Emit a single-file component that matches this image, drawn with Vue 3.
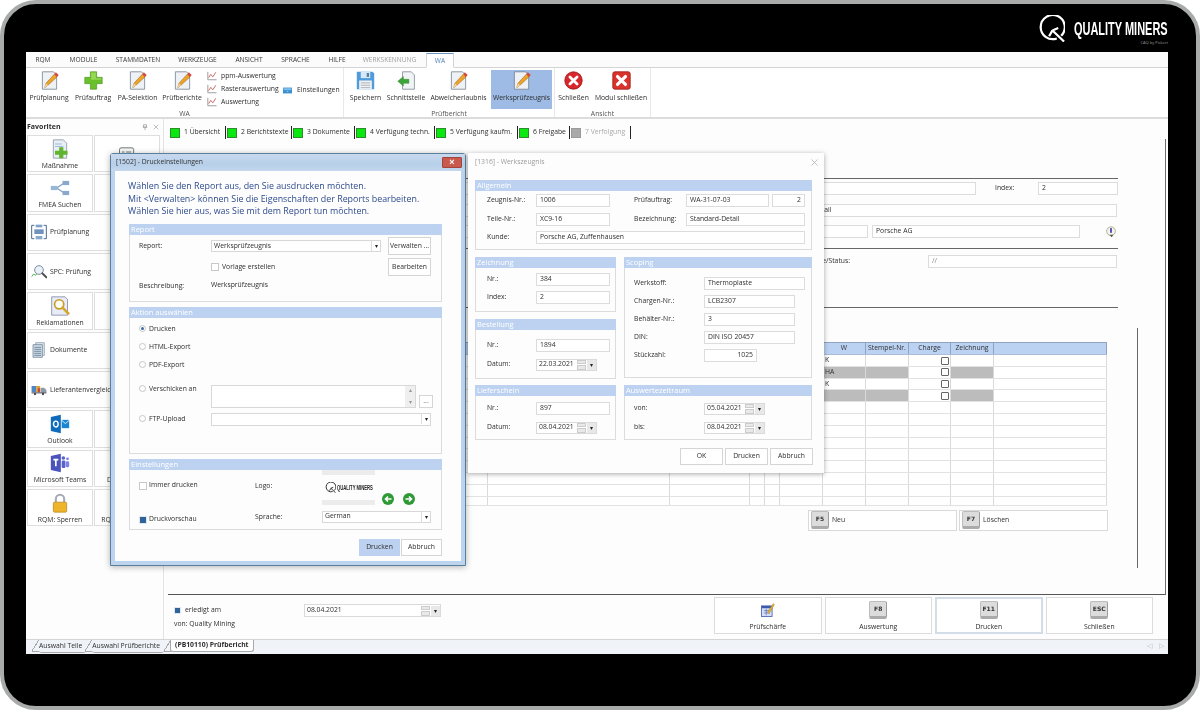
<script setup>
const menu = [
  { t: 'RQM', w: 34 }, { t: 'MODULE', w: 47 }, { t: 'STAMMDATEN', w: 62 }, { t: 'WERKZEUGE', w: 57 },
  { t: 'ANSICHT', w: 46 }, { t: 'SPRACHE', w: 47 }, { t: 'HILFE', w: 36 }
]
const rg1 = [
  { t: 'Prüfplanung', i: 'pen', w: 44 }, { t: 'Prüfauftrag', i: 'plus', w: 44 },
  { t: 'PA-Selektion', i: 'pen', w: 45 }, { t: 'Prüfberichte', i: 'pen', w: 44 }
]
const rg2 = [
  { t: 'Speichern', i: 'floppy', w: 41 }, { t: 'Schnittstelle', i: 'iface', w: 40 },
  { t: 'Abweicherlaubnis', i: 'pen', w: 65 }, { t: 'Werksprüfzeugnis', i: 'pen', w: 61, sel: true }
]
const rg3 = [
  { t: 'Schließen', i: 'xcircle', w: 37 }, { t: 'Modul schließen', i: 'xsquare', w: 58 }
]
const steps = [
  { t: '1 Übersicht', w: 57 }, { t: '2 Berichtstexte', w: 66 }, { t: '3 Dokumente', w: 63 },
  { t: '4 Verfügung techn.', w: 80 }, { t: '5 Verfügung kaufm.', w: 83 }, { t: '6 Freigabe', w: 52 },
  { t: '7 Verfolgung', w: 61, off: true }
]
const side = [
  { cells: [{ t: 'Maßnahme', i: 'docplus' }, { t: '', i: 'list' }] },
  { cells: [{ t: 'FMEA Suchen', i: 'nodes' }, { t: '', i: '' }] },
  { wide: true, t: 'Prüfplanung', i: 'plan' },
  { wide: true, t: 'SPC: Prüfung', i: 'spc' },
  { cells: [{ t: 'Reklamationen', i: 'rekl' }, { t: '', i: '' }] },
  { wide: true, t: 'Dokumente', i: 'docs' },
  { wide: true, t: 'Lieferantenvergleich', i: 'truck' },
  { cells: [{ t: 'Outlook', i: 'outlook' }, { t: '', i: '' }] },
  { cells: [{ t: 'Microsoft Teams', i: 'teams' }, { t: 'Datenblätter', i: '' }] },
  { cells: [{ t: 'RQM: Sperren', i: 'lock' }, { t: 'RQM: Abmelden', i: '' }] }
]
const gridCols = [320, 182, 80, 15, 15, 43, 43, 43, 42, 43, 113]
const gridRows = [
  { w: 'K' }, { w: 'HA', gray: true }, { w: 'K' }, { w: '', gray: true },
  {}, {}, {}, {}, {}, {}, {}, {}, {}
]
const headers = ['', '', '', '', '', '', 'W', 'Stempel-Nr.', 'Charge', 'Zeichnung', '']
const bottomBtns = [
  { t: 'Prüfschärfe', i: 'cal' }, { t: 'Auswertung', k: 'F8' },
  { t: 'Drucken', k: 'F11', on: true }, { t: 'Schließen', k: 'ESC' }
]
</script>

<template>
  <div class="device">
    <svg class="defs" width="0" height="0" aria-hidden="true">
      <symbol id="i-pen" viewBox="0 0 24 24">
        <path d="M3 1h14l4 4v18H3z" fill="#eef1f5" stroke="#75808e" stroke-width="1" />
        <path d="M6 21l1.500-5.500L18 4l3.500 3.500L10 18z" fill="#eda32a" stroke="#8d5f15" stroke-width=".6" />
        <path d="M18 4l2-2.400 3.600 3.400-2.100 2.500z" fill="#d5493e" />
        <path d="M6 21l1.500-5.500 2.500 2.500z" fill="#f5d9a5" />
      </symbol>
      <symbol id="i-plus" viewBox="0 0 24 24">
        <path d="M8 1h8v7h7v8h-7v7H8v-7H1V8h7z" fill="#6abf2c" stroke="#4c9320" stroke-width=".8" />
        <path d="M9 2h6v7h7v2H9z" fill="#93d951" />
      </symbol>
      <symbol id="i-floppy" viewBox="0 0 24 24">
        <path d="M1 1h20l2 2v20H1z" fill="#4f9bdc" />
        <path d="M6 1h12v8H6z" fill="#d7e8f6" />
        <path d="M13.500 2.500h3v5h-3z" fill="#5d7f9d" />
        <path d="M4 12h16v11H4z" fill="#f2f2f2" />
        <path d="M6 15h12M6 18h12M6 21h12" stroke="#9aa4ad" stroke-width="1" />
      </symbol>
      <symbol id="i-iface" viewBox="0 0 24 24">
        <path d="M7 1h11l4 4v18H7z" fill="#f1f4f6" stroke="#7d8894" stroke-width="1" />
        <path d="M1 13l7-6v3.500h7v5H8V19z" fill="#3ca53a" stroke="#22791f" stroke-width=".5" />
      </symbol>
      <symbol id="i-xcircle" viewBox="0 0 24 24">
        <circle cx="12" cy="12" r="11" fill="#d8262c" stroke="#9c1115" stroke-width="1" />
        <path d="M7.500 7.500l9 9m0-9l-9 9" stroke="#fff" stroke-width="3.500" stroke-linecap="round" />
      </symbol>
      <symbol id="i-xsquare" viewBox="0 0 24 24">
        <rect x="1" y="1" width="22" height="22" rx="2.500" fill="#d8342c" stroke="#9c1a15" stroke-width="1" />
        <path d="M7 7l10 10m0-10L7 17" stroke="#fff" stroke-width="4" stroke-linecap="round" />
      </symbol>
      <symbol id="i-chart" viewBox="0 0 12 12">
        <path d="M1 1v9.500h10.500" fill="none" stroke="#8b8b8b" stroke-width="1" />
        <path d="M2 8l2.500-4 2.500 3 3.500-5.500" fill="none" stroke="#c2554c" stroke-width="1" />
      </symbol>
      <symbol id="i-card" viewBox="0 0 14 9">
        <rect width="14" height="9" fill="#3a8fcf" />
        <rect x="1" y="1" width="12" height="3" fill="#7fc0ec" />
        <path d="M6 5.500h2v1H6z" fill="#dcefff" />
      </symbol>
      <symbol id="i-docplus" viewBox="0 0 24 24">
        <path d="M4 1h12l4 4v18H4z" fill="#e9eef4" stroke="#8d97a3" stroke-width="1" />
        <path d="M6 6h8M6 9h10" stroke="#8fb4d8" stroke-width="1" />
        <path d="M11 10h5v4h5v5h-5v4h-5v-4H6v-5h5z" fill="#5eb42c" />
      </symbol>
      <symbol id="i-list" viewBox="0 0 24 24">
        <rect x="3" y="1" width="17" height="22" rx="2" fill="#f6f6f6" stroke="#6d7b78" stroke-width="1.200" />
        <path d="M6 6h3M11 6h6M6 11h3M11 11h6M6 16h3M11 16h6" stroke="#6d7b78" stroke-width="1.400" />
        <path d="M14 17h8v6h-8z" fill="#b8b8b8" />
      </symbol>
      <symbol id="i-nodes" viewBox="0 0 24 24">
        <path d="M8 12l9-6M8 12l9 6" stroke="#7f9fc4" stroke-width="1.500" />
        <rect x="1" y="9.500" width="8" height="5" fill="#9ab6d6" />
        <rect x="15" y="3.500" width="8" height="5" fill="#8ba9cc" />
        <rect x="15" y="15.500" width="8" height="5" fill="#8ba9cc" />
      </symbol>
      <symbol id="i-plan" viewBox="0 0 24 24">
        <path d="M5 2H1v20h4M19 2h4v20h-4" fill="none" stroke="#4d6a8e" stroke-width="1.500" />
        <rect x="7" y="1" width="10" height="4" fill="#7ea1c8" />
        <rect x="5" y="8" width="14" height="7" fill="#6f93bb" />
        <rect x="7" y="18" width="10" height="5" fill="#88a8cc" />
      </symbol>
      <symbol id="i-spc" viewBox="0 0 24 24">
        <path d="M1 19l3-4 3 2 3-5" fill="none" stroke="#58b25a" stroke-width="1.500" />
        <circle cx="12" cy="9" r="6.500" fill="#eaf2f8" stroke="#7b8ea2" stroke-width="1.500" />
        <path d="M17 14l6 6" stroke="#4c4c4c" stroke-width="3" stroke-linecap="round" />
      </symbol>
      <symbol id="i-rekl" viewBox="0 0 24 24">
        <path d="M2 1h16l3 3v19H2z" fill="#e9ecf6" stroke="#8389a8" stroke-width="1" />
        <circle cx="11" cy="10" r="5.500" fill="#fdfdf2" stroke="#c79d2a" stroke-width="2" />
        <path d="M15 14l7 7" stroke="#d3a62d" stroke-width="3" stroke-linecap="round" />
      </symbol>
      <symbol id="i-docs" viewBox="0 0 24 24">
        <path d="M7 1h13v19H7z" fill="#dfe6ee" stroke="#7e8fa2" stroke-width="1" />
        <path d="M3 4h14v19H3z" fill="#cfdce9" stroke="#61748a" stroke-width="1" />
        <path d="M5 8h10M5 11h10M5 14h10M5 17h10M5 20h10" stroke="#4d6480" stroke-width="1" />
      </symbol>
      <symbol id="i-truck" viewBox="0 0 28 24">
        <rect x="1" y="5" width="8" height="11" fill="#4e86c6" />
        <rect x="9" y="5" width="7" height="11" fill="#d8a13a" />
        <rect x="12" y="9" width="4" height="7" fill="#c8473c" />
        <path d="M17 8h6l4 4v5H17z" fill="#8d9bab" />
        <rect x="1" y="16" width="26" height="2" fill="#667" />
        <circle cx="7" cy="19" r="2" fill="#444" />
        <circle cx="21" cy="19" r="2" fill="#444" />
      </symbol>
      <symbol id="i-outlook" viewBox="0 0 24 24">
        <path d="M1 3.500L13 1v22L1 20.500z" fill="#0f6cbd" />
        <ellipse cx="7" cy="12" rx="2.800" ry="3.500" fill="none" stroke="#fff" stroke-width="1.700" />
        <path d="M14 7h9v10h-9z" fill="#1884d2" />
        <path d="M14 7.500l4.500 4 4.500-4" fill="none" stroke="#fff" stroke-width="1" />
      </symbol>
      <symbol id="i-teams" viewBox="0 0 24 24">
        <path d="M1 3.500L13 1v22L1 20.500z" fill="#4b53bc" />
        <path d="M4 8h6M7 8v8" stroke="#fff" stroke-width="2" />
        <rect x="14" y="9" width="4.500" height="9" rx="1.500" fill="#5a62c8" />
        <rect x="19" y="10" width="4" height="7" rx="1.500" fill="#7b83eb" />
        <circle cx="16" cy="6" r="2.200" fill="#5a62c8" />
        <circle cx="21" cy="7" r="1.700" fill="#7b83eb" />
      </symbol>
      <symbol id="i-lock" viewBox="0 0 24 24">
        <path d="M7 11V7a5 5 0 0 1 10 0v4" fill="none" stroke="#a6abb2" stroke-width="2.500" />
        <rect x="4" y="11" width="16" height="12" rx="1.500" fill="#eeb52c" stroke="#b07f12" stroke-width=".8" />
      </symbol>
      <symbol id="i-cal" viewBox="0 0 24 24">
        <rect x="1" y="5" width="18" height="18" fill="#d6def5" stroke="#3f5bb0" stroke-width="1.400" />
        <path d="M1 5h18v4H1z" fill="#3f5bb0" />
        <path d="M5 13h10M5 17h10M9 10v11" stroke="#3f5bb0" stroke-width="1" />
        <path d="M11 16L21 1l2 2-9 15z" fill="#e3b62e" stroke="#7a5d10" stroke-width=".5" />
      </symbol>
      <symbol id="i-info" viewBox="0 0 16 16">
        <circle cx="8" cy="7" r="5.800" fill="#f5f5ea" stroke="#9a9a70" stroke-width="1" />
        <rect x="6.800" y="2.800" width="2.400" height="6.500" rx="1" fill="#4b3ec8" />
        <path d="M6 11.500h5L9 15z" fill="#505050" />
      </symbol>
      <symbol id="i-q" viewBox="0 0 28 28">
        <path d="M19.500 24.300A12.500 12.500 0 1 1 24 21.500" fill="none" stroke="currentColor" stroke-width="2.300" />
        <path d="M27 27.500L15 16M15 16l-3.500 6M15 16l6-2.500" fill="none" stroke="currentColor" stroke-width="2.300" />
      </symbol>
    </svg>

    <div class="brand">
      <svg class="brand-q"><use href="#i-q" /></svg>
      <div class="brand-text">
        <span class="brand-name">QUALITY MINERS</span>
        <span class="brand-sub">CAQ by Pickert</span>
      </div>
    </div>

    <div class="screen">
      <div class="menubar">
        <span v-for="m in menu" :key="m.t" class="menu-item" :style="{ width: m.w + 'px' }">{{ m.t }}</span>
        <span class="menu-item menu-dim">WERKSKENNUNG</span>
        <span class="menu-tab">WA</span>
      </div>

      <div class="ribbon">
        <div class="rgroup rg-a">
          <div class="ritems">
            <div v-for="r in rg1" :key="r.t" class="ritem" :style="{ width: r.w + 'px' }">
              <svg class="ricon"><use :href="'#i-' + r.i" /></svg>
              <span>{{ r.t }}</span>
            </div>
            <div class="rsmall">
              <div class="rs-line"><svg class="rs-icon"><use href="#i-chart" /></svg>ppm-Auswertung</div>
              <div class="rs-line"><svg class="rs-icon"><use href="#i-chart" /></svg>Rasterauswertung</div>
              <div class="rs-line"><svg class="rs-icon"><use href="#i-chart" /></svg>Auswertung</div>
            </div>
            <div class="rs-line rs-set"><svg class="rs-card"><use href="#i-card" /></svg>Einstellungen</div>
          </div>
          <div class="rlabel">WA</div>
        </div>
        <div class="rgroup rg-b">
          <div class="ritems">
            <div v-for="r in rg2" :key="r.t" class="ritem" :class="{ selected: r.sel }" :style="{ width: r.w + 'px' }">
              <svg class="ricon"><use :href="'#i-' + r.i" /></svg>
              <span>{{ r.t }}</span>
            </div>
          </div>
          <div class="rlabel">Prüfbericht</div>
        </div>
        <div class="rgroup rg-c">
          <div class="ritems">
            <div v-for="r in rg3" :key="r.t" class="ritem" :style="{ width: r.w + 'px' }">
              <svg class="ricon"><use :href="'#i-' + r.i" /></svg>
              <span>{{ r.t }}</span>
            </div>
          </div>
          <div class="rlabel">Ansicht</div>
        </div>
      </div>

      <div class="body">
        <aside class="sidebar">
          <div class="side-head">
            <b>Favoriten</b>
            <span class="side-tools">
              <svg class="pin" viewBox="0 0 8 8"><path d="M2 1h4v3H2zM1 4.500h6M4 5v3" fill="none" stroke="#999" stroke-width="1" /></svg>
              <svg class="pin" viewBox="0 0 8 8"><path d="M1 1l6 6m0-6L1 7" stroke="#aaa" stroke-width="1" /></svg>
            </span>
          </div>
          <div class="side-list">
            <template v-for="(s, i) in side" :key="i">
              <div v-if="s.wide" class="side-wide">
                <svg class="side-icon-s"><use :href="'#i-' + s.i" /></svg>
                <span>{{ s.t }}</span>
              </div>
              <div v-else class="side-pair">
                <div v-for="c in s.cells" :key="c.t + c.i" class="side-cell">
                  <svg v-if="c.i" class="side-icon"><use :href="'#i-' + c.i" /></svg>
                  <span>{{ c.t }}</span>
                </div>
              </div>
            </template>
          </div>
        </aside>

        <main class="main">
          <div class="steps">
            <div v-for="s in steps" :key="s.t" class="step" :class="{ off: s.off }" :style="{ width: s.w + 'px' }">
              <i class="lamp"></i>
              <span>{{ s.t }}</span>
            </div>
          </div>

          <div class="pane">
            <div class="form">
              <div class="fsec sec-a">
                <div class="frow">
                  <span class="inp w-f1"></span>
                  <span class="flab lab-index">Index:</span>
                  <span class="inp w-f2">2</span>
                </div>
                <div class="frow">
                  <span class="inp w-f3">Standard-Detail</span>
                </div>
                <div class="frow">
                  <span class="inp w-f4"></span>
                  <span class="inp w-f5">Porsche AG</span>
                  <svg class="info"><use href="#i-info" /></svg>
                </div>
              </div>
              <div class="fsec sec-b">
                <div class="frow">
                  <span class="flab lab-status">Name/Status:</span>
                  <span class="inp w-f6 dim">//</span>
                </div>
              </div>
              <div class="fsec sec-c"></div>
            </div>
            <div class="tabpage">
              <div class="grid">
                <div class="grow ghead">
                  <span v-for="(h, i) in headers" :key="i" class="gcell" :style="{ width: gridCols[i] + 'px' }">{{ h }}</span>
                </div>
                <div v-for="(r, ri) in gridRows" :key="ri" class="grow">
                  <span
                    v-for="(w, i) in gridCols"
                    :key="i"
                    class="gcell"
                    :class="{ gray: r.gray && i >= 6 && i <= 9 && i !== 8 }"
                    :style="{ width: w + 'px' }"
                  >
                    <template v-if="i === 6">{{ r.w }}</template>
                    <i v-if="i === 8 && ri < 4" class="gcheck"></i>
                  </span>
                </div>
              </div>
              <div class="fbtns">
                <div class="fbtn"><span class="key">F5</span>Neu</div>
                <div class="fbtn"><span class="key">F7</span>Löschen</div>
              </div>
            </div>
          </div>

          <div class="footer">
            <div class="foot-left">
              <div class="foot-l1"><i class="cb on"></i>erledigt am</div>
              <div class="foot-l2">von: Quality Mining</div>
            </div>
            <div class="date date-foot">
              <span class="date-v">08.04.2021</span>
              <span class="spin"><i></i><i></i></span>
              <span class="drop">▾</span>
            </div>
            <div class="foot-btns">
              <div v-for="b in bottomBtns" :key="b.t" class="fb" :class="{ on: b.on }">
                <span v-if="b.k" class="key">{{ b.k }}</span>
                <svg v-else class="fb-icon"><use :href="'#i-' + b.i" /></svg>
                <span class="fb-t">{{ b.t }}</span>
              </div>
            </div>
          </div>
        </main>
      </div>

      <div class="tabs">
        <span class="tab tab-1">Auswahl Teile</span>
        <span class="tab tab-2">Auswahl Prüfberichte</span>
        <span class="tab tab-on">(PB10110) Prüfbericht</span>
        <span class="tab-nav">◁ ▷</span>
      </div>

      <!-- Window: Druckeinstellungen -->
      <section class="win win-print">
        <header class="pt">
          <span>[1502] - Druckeinstellungen</span>
          <span class="pt-x">×</span>
        </header>
        <div class="pb">
          <p class="intro">Wählen Sie den Report aus, den Sie ausdrucken möchten.<br />Mit &lt;Verwalten&gt; können Sie die Eigenschaften der Reports bearbeiten.<br />Wählen Sie hier aus, was Sie mit dem Report tun möchten.</p>

          <div class="grp g-report">
            <div class="gh">Report</div>
            <div class="gb gb-report">
              <div class="prow p18">
                <span class="pl">Report:</span>
                <span class="sel w170"><span>Werksprüfzeugnis</span><b>▾</b></span>
                <span class="btn pbtn">Verwalten ...</span>
              </div>
              <div class="prow p18">
                <span class="pl"></span>
                <span class="chk-line w177"><i class="cb"></i>Vorlage erstellen</span>
                <span class="btn pbtn pbtn2">Bearbeiten</span>
              </div>
              <div class="prow p-desc">
                <span class="pl">Beschreibung:</span>
                <span class="pv">Werksprüfzeugnis</span>
              </div>
            </div>
          </div>

          <div class="grp g-action">
            <div class="gh">Aktion auswählen</div>
            <div class="gb gb-action">
              <div class="radio"><i class="rd on"></i>Drucken</div>
              <div class="radio"><i class="rd"></i>HTML-Export</div>
              <div class="radio"><i class="rd"></i>PDF-Export</div>
              <div class="radio r-mail">
                <span class="rl"><i class="rd"></i>Verschicken an</span>
                <span class="ta"><span class="ta-bar"><em>▴</em><em>▾</em></span></span>
                <span class="btn dots">...</span>
              </div>
              <div class="radio r-ftp">
                <span class="rl"><i class="rd"></i>FTP-Upload</span>
                <span class="sel w220"><span></span><b>▾</b></span>
              </div>
            </div>
          </div>

          <div class="grp g-set">
            <div class="gh">Einstellungen</div>
            <div class="gb gb-set">
              <div class="set-1">
                <span class="set-chk"><i class="cb"></i>Immer drucken</span>
                <span class="set-lab">Logo:</span>
                <div class="logo-box">
                  <i class="strip"></i>
                  <div class="logo-mini">
                    <svg class="logo-q"><use href="#i-q" /></svg>
                    <span>QUALITY MINERS</span>
                  </div>
                  <i class="strip"></i>
                </div>
                <div class="arrows">
                  <svg viewBox="0 0 12 12"><circle cx="6" cy="6" r="6" fill="#2f9a35" /><path d="M9.500 6H4M6 3.500L3.500 6 6 8.500" fill="none" stroke="#fff" stroke-width="1.600" /></svg>
                  <svg viewBox="0 0 12 12"><circle cx="6" cy="6" r="6" fill="#2f9a35" /><path d="M2.500 6H8M6 3.500L8.500 6 6 8.500" fill="none" stroke="#fff" stroke-width="1.600" /></svg>
                </div>
              </div>
              <div class="set-2">
                <span class="set-chk"><i class="cb on"></i>Druckvorschau</span>
                <span class="set-lab">Sprache:</span>
                <span class="sel w109"><span>German</span><b>▾</b></span>
              </div>
            </div>
          </div>

          <div class="pfoot">
            <span class="btn fbtn-a on">Drucken</span>
            <span class="btn fbtn-a">Abbruch</span>
          </div>
        </div>
      </section>

      <!-- Window: Werkszeugnis -->
      <section class="win win-cert">
        <header class="ct">
          <span>[1316] - Werkszeugnis</span>
          <svg class="ct-x" viewBox="0 0 8 8"><path d="M.5.500l7 7m0-7l-7 7" stroke="#aaa" stroke-width=".8" /></svg>
        </header>
        <div class="grp g-all">
          <div class="gh">Allgemein</div>
          <div class="gb gb-all">
            <div class="crow">
              <span class="cl">Zeugnis-Nr.:</span><span class="inp w74">1006</span>
              <span class="cl cl2">Prüfauftrag:</span><span class="inp w83">WA-31-07-03</span><span class="inp w33 right">2</span>
            </div>
            <div class="crow">
              <span class="cl">Teile-Nr.:</span><span class="inp w74">XC9-16</span>
              <span class="cl cl2">Bezeichnung:</span><span class="inp w119">Standard-Detail</span>
            </div>
            <div class="crow">
              <span class="cl">Kunde:</span><span class="inp w269">Porsche AG, Zuffenhausen</span>
            </div>
          </div>
        </div>
        <div class="cols">
          <div class="col-l">
            <div class="grp g-zei">
              <div class="gh">Zeichnung</div>
              <div class="gb gb-c5">
                <div class="crow"><span class="cl">Nr.:</span><span class="inp w74">384</span></div>
                <div class="crow"><span class="cl">Index:</span><span class="inp w74">2</span></div>
              </div>
            </div>
            <div class="grp g-bes">
              <div class="gh">Bestellung</div>
              <div class="gb gb-c9">
                <div class="crow"><span class="cl">Nr.:</span><span class="inp w74">1894</span></div>
                <div class="crow"><span class="cl">Datum:</span>
                  <div class="date"><span class="date-v">22.03.2021</span><span class="spin"><i></i><i></i></span><span class="drop">▾</span></div>
                </div>
              </div>
            </div>
            <div class="grp g-lie">
              <div class="gh">Lieferschein</div>
              <div class="gb gb-c6">
                <div class="crow"><span class="cl">Nr.:</span><span class="inp w74">897</span></div>
                <div class="crow"><span class="cl">Datum:</span>
                  <div class="date"><span class="date-v">08.04.2021</span><span class="spin"><i></i><i></i></span><span class="drop">▾</span></div>
                </div>
              </div>
            </div>
          </div>
          <div class="col-r">
            <div class="grp g-sco">
              <div class="gh">Scoping</div>
              <div class="gb gb-sco">
                <div class="crow"><span class="cl cl3">Werkstoff:</span><span class="inp w101">Thermoplaste</span></div>
                <div class="crow"><span class="cl cl3">Chargen-Nr.:</span><span class="inp w91">LCB2307</span></div>
                <div class="crow"><span class="cl cl3">Behälter-Nr.:</span><span class="inp w91">3</span></div>
                <div class="crow"><span class="cl cl3">DIN:</span><span class="inp w91">DIN ISO 20457</span></div>
                <div class="crow"><span class="cl cl3">Stückzahl:</span><span class="inp w53 right">1025</span></div>
              </div>
            </div>
            <div class="grp g-aus">
              <div class="gh">Auswertezeitraum</div>
              <div class="gb gb-aus">
                <div class="crow"><span class="cl cl3">von:</span>
                  <div class="date"><span class="date-v">05.04.2021</span><span class="spin"><i></i><i></i></span><span class="drop">▾</span></div>
                </div>
                <div class="crow"><span class="cl cl3">bis:</span>
                  <div class="date"><span class="date-v">08.04.2021</span><span class="spin"><i></i><i></i></span><span class="drop">▾</span></div>
                </div>
              </div>
            </div>
          </div>
        </div>
        <div class="cfoot">
          <span class="btn cbtn">OK</span>
          <span class="btn cbtn">Drucken</span>
          <span class="btn cbtn">Abbruch</span>
        </div>
      </section>
    </div>
  </div>
</template>

<style>
html, body { margin: 0; background: #fff; }
</style>

<style scoped>
.defs { position: absolute; }
.device {
  position: relative;
  width: 1200px; height: 710px;
  box-sizing: border-box;
  background: #000;
  border: 4px solid #a9abab;
  border-radius: 36px;
  padding: 48px 28px 0 22px;
  overflow: hidden;
  font-family: "Open Sans", "Liberation Sans", sans-serif;
  font-size: 6.8px;
  color: #2e2e2e;
  line-height: 1.2;
}
.brand {
  position: absolute; top: 11px; right: 28px;
  display: flex; gap: 6px; color: #fff;
}
.brand-q { width: 27px; height: 27px; color: #fff; }
.brand-text { display: flex; flex-direction: column; align-items: flex-end; width: 97px; padding-top: 5px; }
.brand-name {
  font: 700 18px/19px "Liberation Sans", sans-serif;
  transform: scaleX(.61); transform-origin: right center;
  white-space: nowrap;
}
.brand-sub { font-size: 4px; color: #9a9a9a; margin-top: 1px; line-height: 5px; }

.screen {
  position: relative;
  width: 1142px; height: 602px;
  background: #fdfdfd;
  display: flex; flex-direction: column;
  filter: blur(.25px);
}

/* menu */
.menubar {
  height: 16px; box-sizing: border-box;
  display: flex; align-items: center;
  background: #fbfbfb; border-bottom: 1px solid #d4d4d4;
  font-size: 6.600px; color: #3a3a3a;
  flex: none;
}
.menu-item { text-align: center; white-space: nowrap; }
.menu-dim { color: #a0a0a0; width: 63px; margin-left: 3px; }
.menu-tab {
  margin: 1px 0 -1px 5px; width: 28px; height: 15px; box-sizing: border-box;
  display: flex; align-items: center; justify-content: center;
  border: 1px solid #d4d4d4; border-top: 1px solid #6b94c4; border-bottom: 1px solid #fff;
  background: #fff; color: #4d7fb8;
}

/* ribbon */
.ribbon {
  height: 51px; box-sizing: border-box; flex: none;
  display: flex; background: #fff; border-bottom: 2px solid #dcdcdc;
}
.rgroup { display: flex; flex-direction: column; border-right: 1px solid #e8e8e8; box-sizing: border-box; }
.rg-a { width: 318px; }
.rg-b { width: 211px; }
.rg-c { width: 96px; }
.ritems { display: flex; height: 41px; padding-top: 2px; box-sizing: border-box; flex: none; }
.rg-a .ritems { padding-left: 1px; }
.rg-b .ritems { padding-left: 1px; }
.ritem { display: flex; flex-direction: column; align-items: center; padding-top: 1px; box-sizing: border-box; white-space: nowrap; }
.ritem span { margin-top: 4px; }
.ritem.selected { background: #9dbbe4; }
.ricon { width: 19px; height: 19px; flex: none; }
.rsmall { display: flex; flex-direction: column; gap: 3.200px; margin-left: 3px; padding-top: 1px; width: 76px; }
.rs-line { display: flex; align-items: center; gap: 4px; height: 10px; white-space: nowrap; }
.rs-icon { width: 10px; height: 10px; flex: none; }
.rs-set { margin-top: 15px; }
.rs-card { width: 9px; height: 7px; flex: none; margin-right: 1px; }
.rlabel { text-align: center; color: #555; margin-top: 1px; }

/* body */
.body { flex: 1; display: flex; min-height: 0; }
.sidebar { width: 138px; box-sizing: border-box; border-right: 1px solid #e3e3e3; padding: 0 1px; flex: none; overflow: hidden; }
.side-head { height: 16px; display: flex; align-items: center; justify-content: space-between; font-size: 7px; padding-right: 2px; }
.side-tools { display: flex; gap: 5px; padding-right: 1px; }
.pin { width: 6px; height: 6px; }
.side-list { display: flex; flex-direction: column; gap: 2px; }
.side-pair { display: flex; gap: 1px; height: 37.350px; }
.side-cell {
  width: 66px; box-sizing: border-box; border: 1px solid #dedede;
  display: flex; flex-direction: column; align-items: center; justify-content: flex-end;
  padding-bottom: 1.500px; background: #fff; white-space: nowrap; overflow: hidden;
}
.side-icon { width: 20px; height: 20px; margin-bottom: 3px; }
.side-wide {
  height: 37.350px; box-sizing: border-box; border: 1px solid #dedede; background: #fff;
  display: flex; align-items: center; gap: 3px; padding-left: 3px; white-space: nowrap;
}
.side-icon-s { width: 16px; height: 16px; flex: none; }

/* main */
.main { flex: 1; display: flex; flex-direction: column; padding: 0 2px 0 4px; min-width: 0; }
.steps { height: 20px; display: flex; align-items: flex-end; padding-left: 1px; font-size: 6.800px; flex: none; }
.step { display: flex; align-items: center; gap: 4px; height: 13px; box-sizing: border-box; border-right: 1px solid #222; padding-left: 1px; margin-right: 0; white-space: nowrap; }
.lamp { width: 10px; height: 10px; background: #0be80f; border: 1px solid #2c8c2c; box-sizing: border-box; flex: none; }
.step.off { color: #a9a9a9; }
.step.off .lamp { background: #a9a9a9; border-color: #9a9a9a; }

.pane {
  height: 456px; box-sizing: border-box; flex: none;
  border-right: 1px solid #6d6d6d; border-bottom: 1px solid #555;
  padding-top: 39px;
  display: flex; flex-direction: column;
}
.form { width: 950px; }
.fsec { border-top: 1.500px solid #666; box-sizing: border-box; }
.sec-a { height: 70px; padding-top: 3px; display: flex; flex-direction: column; gap: 8.500px; }
.sec-b { height: 59px; padding-top: 6px; }
.sec-c { height: 21px; }
.frow { display: flex; align-items: center; height: 13px; }
.inp {
  display: inline-flex; align-items: center; height: 13px; box-sizing: border-box;
  border: 1px solid #dcdcdc; padding: 0 3px; background: #fff; white-space: nowrap; flex: none;
}
.inp.right { justify-content: flex-end; }
.inp.dim { color: #888; }
.w-f1 { width: 808px; }
.lab-index { margin-left: 19px; width: 43px; }
.w-f2 { width: 80px; }
.w-f3 { width: 949px; padding-left: 613px; }
.w-f4 { width: 700px; }
.w-f5 { width: 208px; margin-left: 4px; }
.info { width: 12px; height: 12px; margin-left: 25px; }
.lab-status { width: 682px; text-align: right; box-sizing: border-box; }
.w-f6 { width: 189px; margin-left: 78px; }

.tabpage {
  flex: none; width: 970px; height: 240px; box-sizing: border-box;
  border-right: 1px solid #666;
  padding-top: 14px;
}
.grid { width: 939px; }
.grow { display: flex; height: 11.800px; box-sizing: border-box; border-bottom: 1px solid #e2e2e2; }
.grow:last-child { height: 9px; }
.ghead { height: 13px; background: #bcd2f2; border-top: 1px solid #8fa3c0; border-bottom: 1px solid #a9bcd8; text-align: center; }
.gcell {
  flex: none; box-sizing: border-box; border-right: 1px solid #dadada;
  display: flex; align-items: center; padding-left: 2px; position: relative; background: #fff;
}
.ghead .gcell { background: transparent; border-right-color: #8fa3c0; justify-content: center; padding-left: 0; }
.gcell.gray { background: #bcbcbc; }
.gcheck { position: absolute; right: 1px; top: 1.500px; width: 6px; height: 6px; border: 1px solid #666; background: #fdfdfd; border-radius: 1px; }

.fbtns { display: flex; gap: 2px; margin: 4px 0 0 640px; }
.fbtn {
  width: 149px; height: 21px; box-sizing: border-box; border: 1px solid #d9d9d9; background: #fff;
  display: flex; align-items: center; gap: 3px; padding-left: 2px;
}
.key {
  width: 18px; height: 18px; box-sizing: border-box; flex: none;
  display: inline-flex; align-items: flex-start; justify-content: center; padding-top: 3px;
  background: #dcdcdc; border: 1px solid #bcbcbc; border-right-color: #9c9c9c; border-bottom: 3px solid #aaa; border-radius: 2px;
  font: 700 6px "DejaVu Sans", sans-serif; color: #333;
}

.footer { flex: 1; display: flex; align-items: flex-start; }
.foot-left { width: 136px; padding-top: 10px; flex: none; padding-left: 6px; box-sizing: border-box; }
.foot-l1 { display: flex; align-items: center; gap: 4px; height: 10px; }
.foot-l1 .cb { width: 7px; height: 7px; }
.foot-l2 { margin-top: 5px; }
.cb { width: 8px; height: 8px; box-sizing: border-box; border: 1px solid #c9c9c9; background: #fff; flex: none; display: inline-block; }
.cb.on { background: #2f6499; border: 1px solid #dfe7f0; }
.date {
  width: 61px; height: 12px; box-sizing: border-box; flex: none;
  display: flex; align-items: center; border: 1px solid #dadada; background: #fff;
}
.date-v { flex: 1; padding-left: 2px; }
.spin { width: 9px; height: 10px; display: flex; flex-direction: column; gap: 1px; flex: none; }
.spin i { flex: 1; background: #e9e9e9; border: .5px solid #ccc; }
.drop { width: 9px; height: 10px; margin-left: 1px; text-align: center; background: #e8e8e8; font-size: 6px; line-height: 10px; color: #222; flex: none; }
.date-foot { width: 137px; height: 13px; margin-top: 9px; }
.foot-btns { display: flex; gap: 3px; margin-left: 273px; margin-top: 2px; }
.fb {
  width: 107.500px; height: 37px; box-sizing: border-box; border: 1px solid #dcdcdc; background: #fff;
  display: flex; flex-direction: column; align-items: center; padding-top: 3px;
}
.fb.on { border: 2px solid #d3dde8; padding-top: 2px; }
.fb-t { margin-top: 4px; }
.fb-icon { width: 14px; height: 14px; margin: 2px 0 2px; }

/* tabs */
.tabs {
  height: 15px; flex: none; box-sizing: border-box;
  background: #f0f3f8; border-top: 1px solid #d5d5d5;
  display: flex; align-items: flex-start;
  position: relative;
}
.tab { position: relative; white-space: nowrap; height: 12px; display: flex; align-items: center; border-bottom: 1px solid #a8a8a8; border-radius: 0 0 3px 3px; }
.tab-1 { margin-left: 13px; padding-right: 4px; }
.tab-2 { margin-left: 6px; padding-right: 4px; }
.tab::before {
  content: ""; position: absolute; left: -7px; top: 0; width: 7px; height: 12px;
  border-bottom: 1px solid #a8a8a8; box-sizing: border-box;
  background: linear-gradient(to top right, transparent 47%, #a8a8a8 47%, #a8a8a8 55%, transparent 55%);
  transform: scaleX(-1);
}
.tab-on { margin-left: 6px; padding: 0 4px; height: 12px; background: #fff; font-weight: 700; border: 1px solid #a8a8a8; border-top: none; box-sizing: border-box; font-size: 6.800px; }
.tab-nav { margin-left: auto; margin-right: 4px; color: #bbb; font-size: 7px; line-height: 12px; word-spacing: 5px; }

/* windows */
.win { position: absolute; box-sizing: border-box; }
.win-print {
  left: 84px; top: 101px; width: 356px; height: 413px;
  background: #bcd4ee; border: 1px solid #5a7f9c;
  box-shadow: 0 1px 6px rgba(0, 0, 0, .3);
  border-radius: 3px 3px 0 0;
  display: flex; flex-direction: column;
}
.pt {
  height: 17px; flex: none; display: flex; align-items: center; justify-content: space-between;
  padding: 0 3px 0 5px;
  background: linear-gradient(#c8d9ee, #b7cfe9 60%, #c4d8ee);
  color: #333;
}
.pt-x {
  width: 18px; height: 9px; border-radius: 1px;
  background: #c9584d; color: #fff; font: 700 9px/9px "Liberation Sans", sans-serif; text-align: center;
  border: 1px solid #a4453c; box-sizing: content-box;
}
.pb {
  flex: 1; margin: 0 4px 4px; background: #fdfdfd; padding: 0 19px 0 14px;
  display: flex; flex-direction: column;
}
.intro {
  margin: 9px 0 0 -1px; height: 44px; font-size: 8.900px; line-height: 12.500px; color: #2e4b8e; white-space: nowrap;
}
.grp { display: flex; flex-direction: column; box-sizing: border-box; }
.gh {
  height: 11px; flex: none; background: #bdd2f0; color: #fff; padding-left: 2px;
  font-size: 7.500px; line-height: 11px;
}
.gb { flex: 1; border: 1px solid #dcdcdc; border-top: none; box-sizing: border-box; background: #fdfdfd; }
.g-report { width: 313px; height: 78px; }
.g-action { width: 313px; height: 147px; margin-top: 5px; }
.g-set { width: 313px; height: 71px; margin-top: 5px; }
.gb-report { padding: 2px 0 0 9px; display: flex; flex-direction: column; gap: 3px; }
.prow { display: flex; align-items: center; }
.p18 { height: 18px; }
.pl { width: 72px; flex: none; }
.sel {
  height: 12px; box-sizing: border-box; border: 1px solid #d8d8d8; background: #fff;
  display: flex; align-items: center; justify-content: space-between; padding-left: 2px; flex: none;
}
.sel b { width: 8px; height: 10px; border-left: 1px solid #ddd; text-align: center; font-size: 6px; line-height: 10px; color: #222; font-weight: 400; }
.w170 { width: 170px; }
.w220 { width: 220px; height: 13px; }
.w109 { width: 109px; }
.btn {
  box-sizing: border-box; border: 1px solid #d5d5d5; background: #fff;
  display: inline-flex; align-items: center; justify-content: center; flex: none; white-space: nowrap;
}
.pbtn { width: 43px; height: 18px; margin-left: 7px; }
.chk-line { display: flex; align-items: center; gap: 3px; }
.w177 { width: 170px; flex: none; }
.pbtn2 { margin-left: 7px; }
.p-desc { height: 14px; }
.pv { margin-top: -2px; }

.gb-action { padding: 4.500px 0 0 9px; display: flex; flex-direction: column; }
.radio { display: flex; align-items: flex-start; gap: 3px; height: 12px; margin-bottom: 6px; line-height: 12px; }
.rd { width: 5px; height: 5px; border: 1px solid #c6c6c6; border-radius: 50%; background: #fff; flex: none; margin-top: 2.500px; position: relative; display: inline-block; }
.rd.on::after { content: ""; position: absolute; left: 1px; top: 1px; width: 3px; height: 3px; border-radius: 50%; background: #3c6ea5; }
.rl { width: 72px; flex: none; display: flex; gap: 3px; align-items: flex-start; white-space: nowrap; }
.r-mail { height: 25px; margin-top: 6px; gap: 0; margin-bottom: 5px; }
.r-ftp { gap: 0; }
.ta {
  width: 205px; height: 23px; margin-top: 2px; box-sizing: border-box; border: 1px solid #d8d8d8; background: #fff;
  display: flex; justify-content: flex-end;
}
.ta-bar { width: 10px; display: flex; flex-direction: column; justify-content: space-between; background: #efefef; color: #999; text-align: center; font-size: 6px; line-height: 9px; }
.ta-bar em { font-style: normal; }
.dots { width: 14px; height: 13px; margin: 12px 0 0 3px; color: #666; }

.gb-set { padding-left: 9px; }
.set-1 { display: flex; height: 35px; align-items: flex-start; position: relative; }
.set-chk { width: 116px; flex: none; display: flex; align-items: center; gap: 2px; margin-top: 11.500px; height: 8px; }
.set-lab { width: 67px; flex: none; margin-top: 11.500px; line-height: 8px; }
.logo-box { width: 53px; height: 35px; flex: none; display: flex; flex-direction: column; justify-content: space-between; margin-top: 0; }
.strip { display: block; height: 5px; background: #ececec; }
.logo-mini { display: flex; align-items: center; gap: 1px; padding-left: 3px; color: #222; }
.logo-q { width: 11px; height: 11px; color: #222; flex: none; }
.logo-mini span {
  font: 700 7px "Liberation Sans", sans-serif; white-space: nowrap;
  transform: scaleX(.6); transform-origin: left center; letter-spacing: 0;
}
.arrows { display: flex; gap: 9px; margin: 23px 0 0 7px; }
.arrows svg { width: 12px; height: 12px; }
.set-2 { display: flex; align-items: center; height: 13px; margin-top: 5px; }
.set-2 .set-chk { margin-top: 0; position: relative; top: 3px; }
.set-2 .set-lab { margin-top: 0; }
.pfoot { display: flex; justify-content: flex-start; gap: 1px; margin: 9px 0 0 230px; }
.fbtn-a { width: 41px; height: 17px; }
.fbtn-a.on { background: #bdd2f0; border-color: #bdd2f0; }

.win-cert {
  left: 442px; top: 101px; width: 356px; height: 320px;
  background: #fdfdfd; box-shadow: 0 1px 5px rgba(0, 0, 0, .35);
  padding: 0 12px 0 7px;
  display: flex; flex-direction: column;
}
.ct { height: 27px; flex: none; display: flex; align-items: center; justify-content: space-between; padding-bottom: 9px; box-sizing: border-box; margin-right: -6px; color: #9b9b9b; padding-left: 0; }
.ct-x { width: 7px; height: 7px; }
.g-all { height: 70px; flex: none; }
.gb-all { padding: 3px 0 0 11px; display: flex; flex-direction: column; gap: 5.500px; }
.crow { display: flex; align-items: center; height: 13px; }
.cl { width: 49px; flex: none; white-space: nowrap; }
.cl2 { width: 52px; margin-left: 24px; }
.cl3 { width: 70px; }
.w74 { width: 74px; }
.w83 { width: 83px; }
.w33 { width: 33px; margin-left: 3px; }
.w119 { width: 119px; }
.w269 { width: 269px; }
.w101 { width: 101px; }
.w91 { width: 91px; }
.w53 { width: 53px; }
.cols { display: flex; gap: 8px; margin-top: 7px; }
.col-l { width: 141px; display: flex; flex-direction: column; }
.col-r { width: 188px; display: flex; flex-direction: column; }
.g-zei { height: 55px; }
.g-bes { height: 60px; margin-top: 7px; }
.g-lie { height: 55px; margin-top: 6px; }
.g-sco { height: 121px; }
.g-aus { height: 55px; margin-top: 7px; }
.gb-c5 { padding: 5px 0 0 11px; display: flex; flex-direction: column; gap: 5px; }
.gb-c9 { padding: 9px 0 0 11px; display: flex; flex-direction: column; gap: 6px; }
.gb-c6 { padding: 6px 0 0 11px; display: flex; flex-direction: column; gap: 6px; }
.gb-sco { padding: 9px 0 0 9px; display: flex; flex-direction: column; gap: 5px; }
.gb-aus { padding: 6px 0 0 9px; display: flex; flex-direction: column; gap: 6px; }
.cfoot { display: flex; gap: 2px; margin: 8px -1px 0 0; justify-content: flex-end; }
.cbtn { width: 43px; height: 17px; border-bottom-width: 1px; }
</style>
